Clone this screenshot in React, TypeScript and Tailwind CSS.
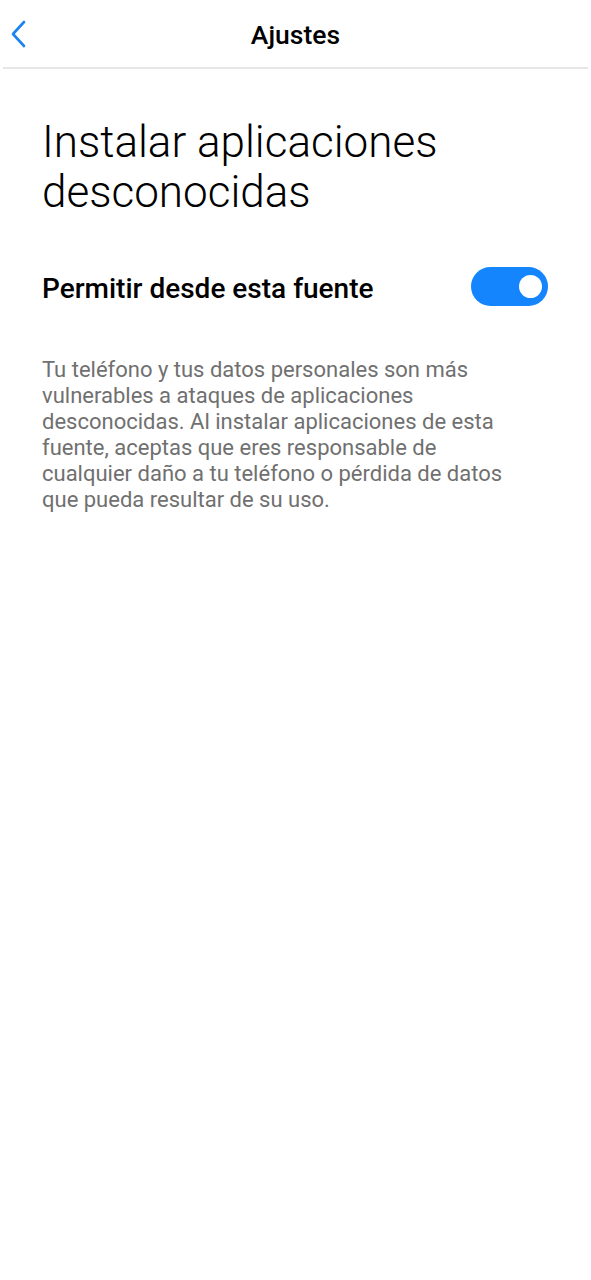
import { useState } from 'react'

const font = { fontFamily: 'Roboto, "Noto Sans", sans-serif' }

function BackIcon() {
  return (
    <svg width="16" height="28" viewBox="0 0 16 28" fill="none">
      <path
        d="M14 2 L3 14 L14 26"
        stroke="#1b84f0"
        strokeWidth="2.6"
        strokeLinecap="round"
        strokeLinejoin="round"
      />
    </svg>
  )
}

function Toggle({ on, onChange }: { on: boolean; onChange: () => void }) {
  return (
    <button
      className={
        on
          ? 'flex h-[39px] w-[77px] shrink-0 items-center justify-end rounded-full bg-[#1585fd] pr-[6px]'
          : 'flex h-[39px] w-[77px] shrink-0 items-center justify-start rounded-full bg-[#d9d9d9] pl-[6px]'
      }
      onClick={onChange}
    >
      <span className="block h-[23px] w-[23px] rounded-full bg-white" />
    </button>
  )
}

export default function App() {
  const [allowed, setAllowed] = useState(true)

  return (
    <div className="min-h-[1280px] w-full bg-white text-black" style={font}>
      <header className="mx-[3px] flex h-[69px] items-center border-b-2 border-[#e6e6e6]">
        <div className="relative flex w-full items-center justify-center">
          <button className="absolute left-[7px] top-[2px]">
            <BackIcon />
          </button>
          <h1 className="mt-[4px] text-[26.5px] font-medium leading-none">Ajustes</h1>
        </div>
      </header>

      <main className="px-[42px]">
        <h2 className="mt-[48px] text-[44px] font-light leading-[50px]">
          Instalar aplicaciones desconocidas
        </h2>

        <div className="mt-[50px] flex items-center justify-between">
          <p className="mt-[4px] text-[28px] font-medium leading-none">
            Permitir desde esta fuente
          </p>
          <div className="mr-[1px]">
            <Toggle on={allowed} onChange={() => setAllowed(!allowed)} />
          </div>
        </div>

        <p className="mt-[51px] w-[480px] text-[22px] leading-[26px] text-[#707070]">
          Tu teléfono y tus datos personales son más vulnerables a ataques de aplicaciones
          desconocidas. Al instalar aplicaciones de esta fuente, aceptas que eres responsable de
          cualquier daño a tu teléfono o pérdida de datos que pueda resultar de su uso.
        </p>
      </main>
    </div>
  )
}
